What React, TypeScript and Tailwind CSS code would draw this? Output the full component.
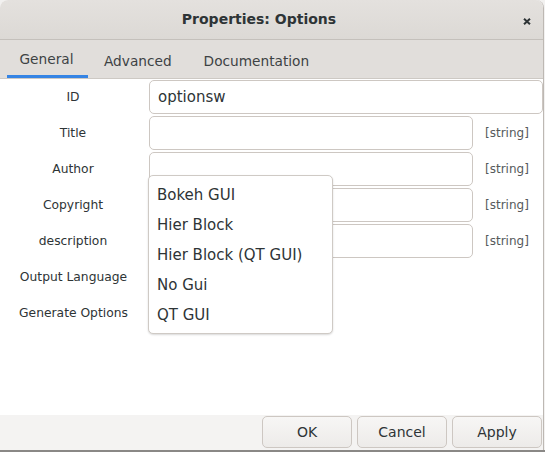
import React from "react";

const font = { fontFamily: '"DejaVu Sans", "Noto Sans", sans-serif' };

const rows = [
  { label: "ID", value: "optionsw", full: true },
  { label: "Title", value: "", full: false },
  { label: "Author", value: "", full: false },
  { label: "Copyright", value: "", full: false },
  { label: "description", value: "", full: false },
];

const choices = ["Bokeh GUI", "Hier Block", "Hier Block (QT GUI)", "No Gui", "QT GUI"];

export default function App() {
  return (
    <div className="relative h-[452px] w-[545px] overflow-hidden bg-[#f2f1f0] text-[#2e3436]" style={font}>
      <div className="flex h-[450px] w-[544px] flex-col overflow-hidden rounded-t-[8px] border-r border-[#bdb8b3] bg-white">
        {/* title bar */}
        <div className="relative flex h-[40px] shrink-0 items-center justify-center border-b border-[#c4c0bb] bg-gradient-to-b from-[#e4e1de] to-[#dcd9d5] pr-[25px]">
          <span className="text-[14px] font-bold">Properties: Options</span>
          <svg className="absolute left-[523px] top-[18px]" width="8" height="7" viewBox="0 0 8 7">
            <path d="M1 0.8 L7 6.2 M7 0.8 L1 6.2" stroke="#2e3436" strokeWidth="2" />
          </svg>
        </div>

        {/* tabs */}
        <div className="flex h-[39px] shrink-0 items-stretch border-b border-[#cdc9c4] bg-[#e1dedb] pl-[7px] text-[13.7px] text-[#3d4244]">
          <div className="flex w-[81px] items-center justify-center border-b-[3px] border-[#3584e4] pt-[4px] pr-[2px]">General</div>
          <div className="flex items-center pl-[16px] pt-[4px]">Advanced</div>
          <div className="flex items-center pl-[32px] pt-[4px]">Documentation</div>
        </div>

        {/* form */}
        <div className="flex flex-1 flex-col gap-[2px] bg-white pt-[1px]">
          {rows.map((row) => (
            <div key={row.label} className="flex h-[34px] items-center">
              <div className="w-[146px] text-center text-[12.3px]">{row.label}</div>
              <div
                className={
                  (row.full ? "w-[394px]" : "w-[324px]") +
                  " ml-[3px] flex h-[34px] items-center rounded-[5px] border border-[#cdc7c2] bg-white pl-[8px] text-[15px]"
                }
              >
                {row.value}
              </div>
              {row.full ? null : <div className="pl-[12px] text-[12px] text-[#555a5c]">[string]</div>}
            </div>
          ))}
          <div className="flex h-[34px] items-center">
            <div className="w-[146px] pl-[1px] text-center text-[12.3px]">Output Language</div>
          </div>
          <div className="flex h-[34px] items-center">
            <div className="w-[146px] pl-[1px] text-center text-[12.3px]">Generate Options</div>
          </div>
        </div>

        {/* buttons */}
        <div className="flex h-[35px] shrink-0 items-start justify-end gap-[5px] bg-[#f4f3f2] pr-[1px] pt-[1px]">
          {["OK", "Cancel", "Apply"].map((label) => (
            <button
              key={label}
              className="h-[32px] w-[90px] rounded-[5px] border border-[#cdc7c2] bg-gradient-to-b from-[#f7f6f5] to-[#edebe9] text-[14px] text-[#2e3436]"
            >
              {label}
            </button>
          ))}
        </div>
      </div>
      <div className="h-[2px] bg-[#8a8886]" />

      {/* dropdown popup */}
      <div className="absolute left-[148px] top-[175px] flex h-[159px] w-[185px] flex-col rounded-[5px] border border-[#cfcac5] bg-white pt-[4px] shadow-[0_1px_2px_rgba(0,0,0,0.15)]">
        {choices.map((c) => (
          <div key={c} className="flex h-[30px] items-center pl-[8px] text-[15px]">
            {c}
          </div>
        ))}
      </div>
    </div>
  );
}
